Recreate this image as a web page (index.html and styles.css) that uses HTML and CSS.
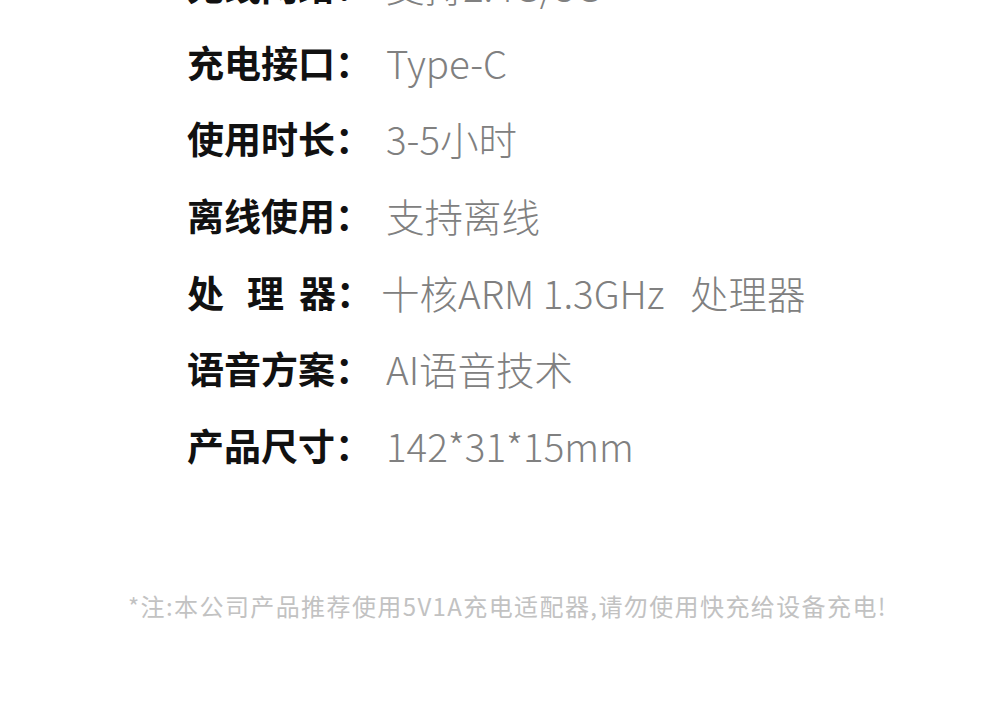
FILE: index.html
```html
<!DOCTYPE html>
<html lang="zh-CN">
<head>
<meta charset="utf-8">
<link rel="stylesheet" href="styles.css">
</head>
<body>
<div class="page">
  <ul class="specs">
    <li class="row"><span class="label">无线网络：</span><span class="value">支持2.4G/5G</span></li>
    <li class="row"><span class="label">充电接口：</span><span class="value">Type-C</span></li>
    <li class="row"><span class="label">使用时长：</span><span class="value">3-5小时</span></li>
    <li class="row"><span class="label">离线使用：</span><span class="value">支持离线</span></li>
    <li class="row"><span class="label"><span class="sp1">处</span><span class="sp2">理</span>器：</span><span class="value value-tight">十核ARM 1.3GHz&nbsp;&nbsp;&nbsp;处理器</span></li>
    <li class="row"><span class="label">语音方案：</span><span class="value">AI语音技术</span></li>
    <li class="row"><span class="label">产品尺寸：</span><span class="value">142*31*15mm</span></li>
  </ul>
  <p class="note">*注:本公司产品推荐使用5V1A充电适配器,请勿使用快充给设备充电!</p>
</div>
</body>
</html>
```

FILE: styles.css
```css
html, body {
  margin: 0;
  padding: 0;
  background: #ffffff;
}
body {
  width: 990px;
  height: 708px;
  overflow: hidden;
  font-family: "Noto Sans CJK SC", "Noto Sans", sans-serif;
}
.page {
  display: flex;
  flex-direction: column;
}
.specs {
  list-style: none;
  margin: -53px 0 0 0;
  padding: 0 0 0 187px;
  display: flex;
  flex-direction: column;
}
.row {
  display: flex;
  align-items: center;
  height: 76.6px;
}
.label {
  font-size: 37px;
  font-weight: 700;
  color: #111111;
  width: 199px;
  flex: none;
  white-space: pre;
}
.sp1 {
  margin-right: 23px;
}
.sp2 {
  margin-right: 15px;
}
.value {
  font-size: 38.5px;
  font-weight: 250;
  color: #808080;
  white-space: pre;
}
.value-tight {
  margin-left: -5px;
}
.note {
  margin: 108px 0 0 0;
  padding-left: 128px;
  font-size: 24px;
  line-height: 30px;
  letter-spacing: 1.4px;
  color: #c2c2c2;
  white-space: nowrap;
}
```
